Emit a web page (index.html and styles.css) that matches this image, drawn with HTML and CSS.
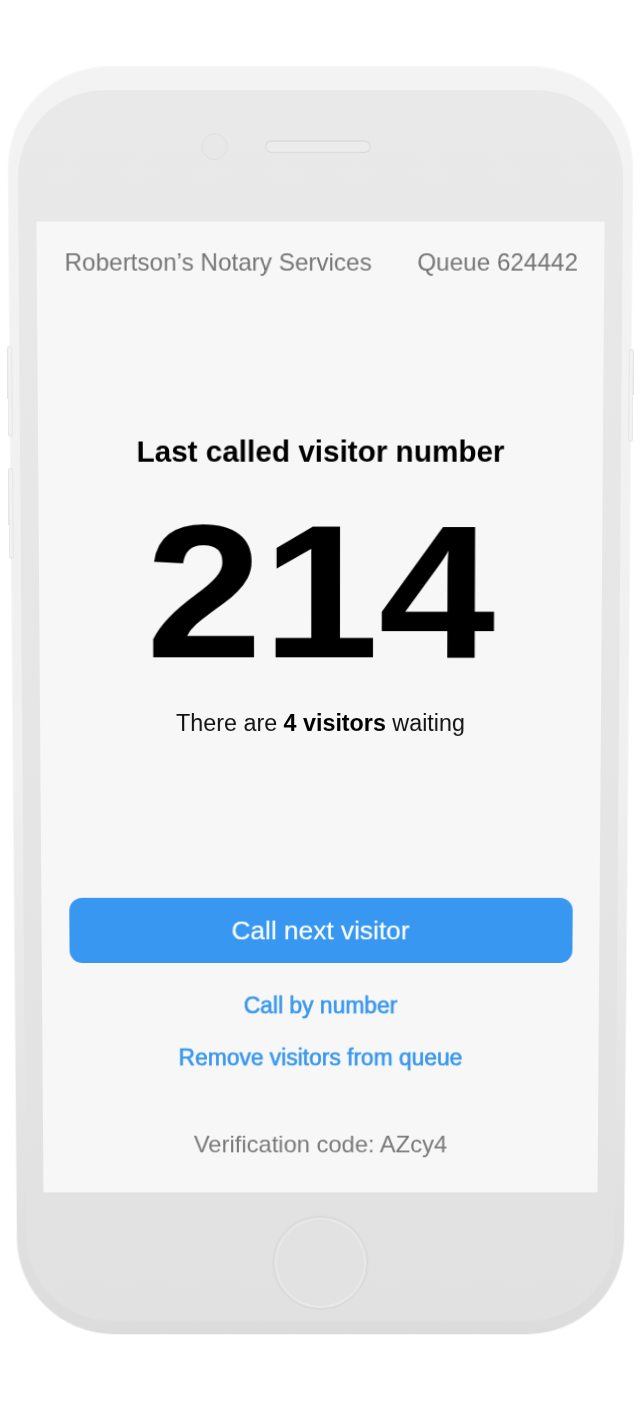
FILE: index.html
```html
<!DOCTYPE html>
<html lang="en">
<head>
<meta charset="utf-8">
<title>Queue</title>
<link rel="stylesheet" href="styles.css">
</head>
<body>
<div class="phone">
  <span class="side-btn side-left side-a"></span>
  <span class="side-btn side-left side-b"></span>
  <span class="side-btn side-right side-c"></span>
  <div class="face">
    <div class="top-bezel">
      <span class="camera"></span>
      <span class="speaker"></span>
    </div>
    <main class="screen">
      <header class="bar">
        <span>Robertson’s Notary Services</span>
        <span>Queue 624442</span>
      </header>
      <h1 class="title">Last called visitor number</h1>
      <div class="number">214</div>
      <p class="waiting">There are <strong>4 visitors</strong> waiting</p>
      <button class="primary" type="button">Call next visitor</button>
      <a class="link" href="#">Call by number</a>
      <a class="link" href="#">Remove visitors from queue</a>
      <p class="code">Verification code: AZcy4</p>
    </main>
    <div class="bottom-bezel">
      <span class="home"></span>
    </div>
  </div>
</div>
</body>
</html>
```
FILE: styles.css
```css
html, body {
  margin: 0;
  padding: 0;
  background: #ffffff;
}

body {
  font-family: "Liberation Sans", Arial, Helvetica, sans-serif;
  overflow: hidden;
}

.phone {
  position: relative;
  box-sizing: border-box;
  width: 615px;
  height: 1268px;
  margin: 77px 0 0 12.5px;
  padding: 22px 9px 14px;
  border-radius: 98px;
  background: linear-gradient(#f3f3f3 0%, #f0f0f0 55%, #dcdcdc 100%);
  box-shadow: 0 0 0 1px rgba(0, 0, 0, 0.035);
  transform: perspective(2000px) rotateX(-2.94deg);
}

.side-btn {
  position: absolute;
  width: 3px;
  background: #f2f2f2;
  border: 1px solid #e5e5e5;
  border-radius: 2px;
}

.side-left { left: -3px; }
.side-right { right: -3px; }
.side-a { top: 272px; height: 87px; }
.side-b { top: 392px; height: 88px; }
.side-c { top: 275px; height: 89px; }

.face {
  box-sizing: border-box;
  height: 100%;
  padding: 0 18px;
  border-radius: 86px;
  background: linear-gradient(#e9e9e9 0%, #e6e6e6 50%, #e1e1e1 100%);
  display: flex;
  flex-direction: column;
}

.top-bezel {
  box-sizing: border-box;
  height: 128px;
  padding: 42px 68.5px 0 0;
  display: flex;
  justify-content: center;
  align-items: flex-start;
  gap: 36.5px;
}

.camera {
  box-sizing: border-box;
  width: 26px;
  height: 26px;
  border-radius: 50%;
  border: 1px solid #dedede;
  background: #e8e8e8;
}

.speaker {
  box-sizing: border-box;
  width: 104px;
  height: 12px;
  margin-top: 7px;
  border-radius: 6px;
  border: 1px solid #d8d8d8;
  border-top-color: #d2d2d2;
  background: #ececec;
}

.screen {
  height: 972px;
  flex: none;
  background: #f7f7f7;
  display: flex;
  flex-direction: column;
  text-align: center;
}

.bar {
  height: 80px;
  flex: none;
  display: flex;
  justify-content: space-between;
  align-items: center;
  padding: 0 26px 0 27.5px;
  font-size: 24px;
  color: #767676;
}

.title {
  margin: 128px 0 0;
  font-size: 29.5px;
  line-height: 36px;
  font-weight: 700;
  color: #000000;
}

.number {
  margin-top: 17px;
  font-size: 209px;
  line-height: 209px;
  font-weight: 700;
  color: #000000;
  transform: scaleY(0.9);
  transform-origin: 50% 48%;
}

.waiting {
  margin: 10.5px 0 0;
  font-size: 23.3px;
  line-height: 30px;
  color: #111111;
}

.waiting strong {
  font-weight: 700;
  color: #000000;
}

.primary {
  flex: none;
  margin: 161px 27.5px 0;
  height: 66px;
  padding: 0;
  border: 0;
  border-radius: 13px;
  background: #3797f1;
  color: #ffffff;
  font-family: "Liberation Sans", Arial, Helvetica, sans-serif;
  font-size: 26.4px;
  line-height: 66px;
  -webkit-text-stroke: 0.2px #ffffff;
}

.link {
  display: block;
  margin-top: 28.5px;
  font-size: 23px;
  line-height: 30px;
  color: #3a98ee;
  text-decoration: none;
  -webkit-text-stroke: 0.65px #3a98ee;
}

.link + .link {
  margin-top: 23px;
}

.code {
  margin: 59px 0 0;
  font-size: 24px;
  line-height: 30px;
  color: #7a7a7a;
}

.bottom-bezel {
  flex: 1;
  display: flex;
  justify-content: center;
  align-items: flex-start;
  padding-top: 23.5px;
}

.home {
  box-sizing: border-box;
  width: 97px;
  height: 97px;
  border-radius: 50%;
  border: 2px solid #dadada;
  box-shadow: inset 0 0 0 2px #e9e9e9;
  background: #e2e2e2;
}
```
